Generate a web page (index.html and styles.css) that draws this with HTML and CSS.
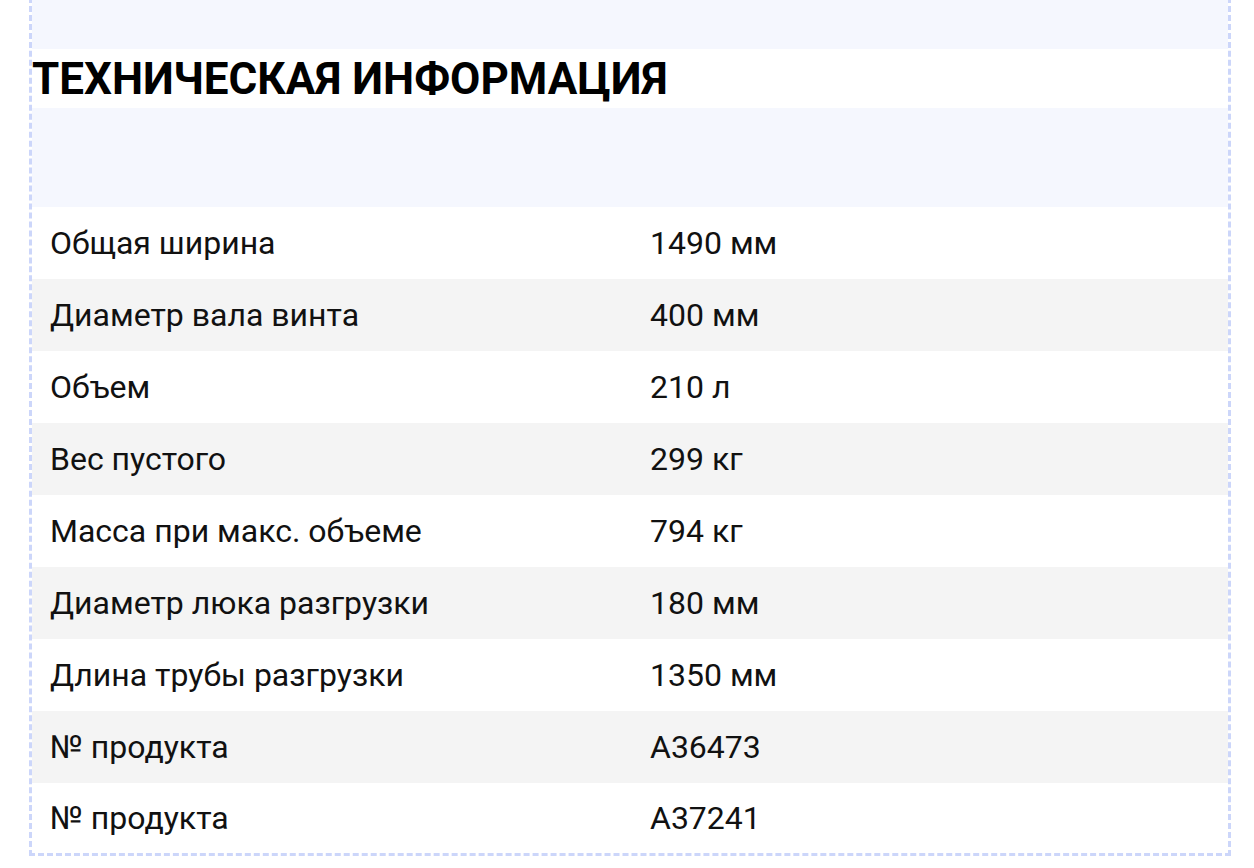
FILE: index.html
```html
<!DOCTYPE html>
<html lang="ru">
<head>
<meta charset="utf-8">
<link rel="stylesheet" href="styles.css">
</head>
<body>
<section class="spec">
  <div class="band band-top"></div>
  <h2 class="spec-title">ТЕХНИЧЕСКАЯ ИНФОРМАЦИЯ</h2>
  <div class="band band-mid"></div>
  <table class="spec-table">
    <tbody>
      <tr><td>Общая ширина</td><td>1490 мм</td></tr>
      <tr><td>Диаметр вала винта</td><td>400 мм</td></tr>
      <tr><td>Объем</td><td>210 л</td></tr>
      <tr><td>Вес пустого</td><td>299 кг</td></tr>
      <tr><td>Масса при макс. объеме</td><td>794 кг</td></tr>
      <tr><td>Диаметр люка разгрузки</td><td>180 мм</td></tr>
      <tr><td>Длина трубы разгрузки</td><td>1350 мм</td></tr>
      <tr><td>№ продукта</td><td>A36473</td></tr>
      <tr><td>№ продукта</td><td>A37241</td></tr>
    </tbody>
  </table>
</section>
</body>
</html>
```

FILE: styles.css
```css
html, body {
  margin: 0;
  padding: 0;
  background: #ffffff;
}

body {
  font-family: Roboto, "Liberation Sans", Arial, sans-serif;
  color: #111111;
}

.spec {
  width: 1196px;
  margin: -3px 0 0 29px;
  border: 3px dashed #ccd6fa;
}

.band {
  background: #f5f7fe;
}

.band-top {
  height: 49px;
}

.band-mid {
  height: 99px;
}

.spec-title {
  margin: 0;
  height: 59px;
  display: flex;
  align-items: center;
  font-size: 44px;
  font-weight: 700;
  line-height: 1;
  color: #000000;
}

.spec-table {
  width: 100%;
  border-collapse: collapse;
  table-layout: fixed;
}

.spec-table td {
  height: 72px;
  padding: 0 20px 0 18px;
  font-size: 32px;
  line-height: 1;
  vertical-align: middle;
}

.spec-table td + td {
  padding-left: 20px;
}

.spec-table tr:last-child td {
  height: 70px;
}

.spec-table tr:nth-child(even) td {
  background: #f4f4f4;
}
```
